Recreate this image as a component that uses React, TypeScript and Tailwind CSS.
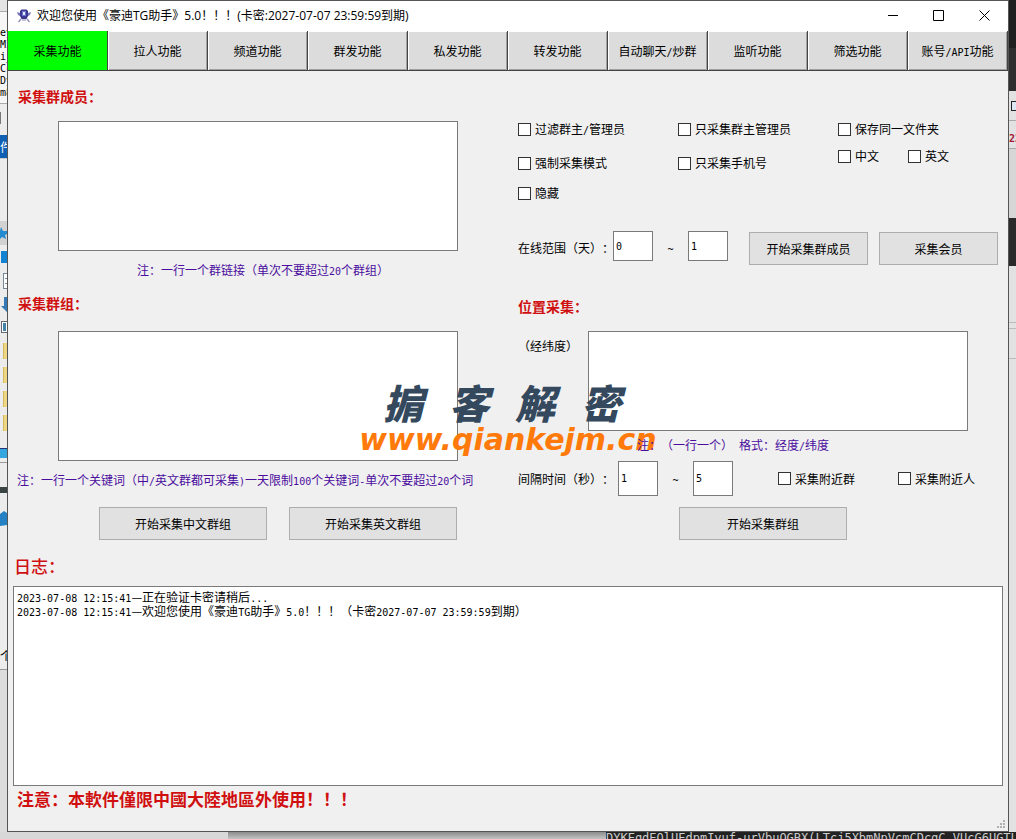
import { Fragment } from "react";

const tabs = [
  "采集功能",
  "拉人功能",
  "频道功能",
  "群发功能",
  "私发功能",
  "转发功能",
  "自动聊天/炒群",
  "监听功能",
  "筛选功能",
  "账号/API功能",
];

const logs = [
  "2023-07-08 12:15:41—正在验证卡密请稍后...",
  "2023-07-08 12:15:41—欢迎您使用《豪迪TG助手》5.0！！！（卡密2027-07-07 23:59:59到期）",
];

// Latin runs sit in a half-width face so they line up with the full-width characters
function T({ s }: { s: string }) {
  return (
    <>
      {s.split(/([\x20-\x7e]+)/).map((part, i) =>
        i % 2 ? (
          <span key={i} className="whitespace-pre font-['DejaVu_Sans_Mono',monospace] text-[10px] leading-none">{part}</span>
        ) : (
          <Fragment key={i}>{part}</Fragment>
        )
      )}
    </>
  );
}

function Check({ label }: { label: string }) {
  return (
    <label className="flex h-5 items-center gap-1 whitespace-nowrap">
      <input type="checkbox" className="size-[13px] shrink-0 appearance-none border border-[#333] bg-white checked:bg-[#333]" />
      <span><T s={label} /></span>
    </label>
  );
}

function Btn({ children, className }: { children: string; className: string }) {
  return (
    <button type="button" className={`h-[33px] border border-[#adadad] bg-[#e1e1e1] ${className}`}>
      <T s={children} />
    </button>
  );
}

function Num({ value, label, className }: { value: string; label: string; className: string }) {
  return (
    <input
      aria-label={label}
      defaultValue={value}
      className={`w-10 border border-[#7a7a7a] bg-white pl-0.5 font-['DejaVu_Sans_Mono',monospace] text-[10px] outline-none ${className}`}
    />
  );
}

function Heading({ children }: { children: string }) {
  return <h2 className="h-5 text-sm leading-[18px] font-bold text-[#d01010]">{children}</h2>;
}

function TitleBar() {
  return (
    <header className="flex h-[30px] items-center bg-white pr-[17px] pl-[9px]">
      <svg width="14" height="14" viewBox="0 0 14 14" aria-hidden="true">
        <path d="M3 2 4.500 .5h5L11 2v5L9.500 10h-5L3 7Z" fill="#3b368f" />
        <path d="M0 3l3 1v3L1 6ZM14 3l-3 1v3l2-1Z" fill="#7774bd" />
        <path d="M5 2h4v5H5Z" fill="#6f78c8" />
        <path d="M6 3h2v3H6Z" fill="#e4e7ff" />
        <path d="M4 10 1.500 13M10 10l2.500 3M5 11h4" stroke="#8a86b0" strokeWidth="1.200" />
      </svg>
      <h1 className="ml-[6px] flex-1 font-['Open_Sans','Noto_Sans_CJK_SC',sans-serif] text-xs whitespace-nowrap">欢迎您使用《豪迪TG助手》5.0！！！(卡密:2027-07-07 23:59:59到期)</h1>
      <div className="flex gap-[34px]">
        <button type="button" aria-label="最小化">
          <svg width="12" height="12" viewBox="0 0 12 12" stroke="#000" fill="none"><path d="M1 5.500h10" /></svg>
        </button>
        <button type="button" aria-label="最大化">
          <svg width="12" height="12" viewBox="0 0 12 12" stroke="#000" fill="none"><path d="M.5 .5h10v10h-10Z" /></svg>
        </button>
        <button type="button" aria-label="关闭">
          <svg width="12" height="12" viewBox="0 0 12 12" stroke="#000" fill="none"><path d="M.5 .5l10 10M10.500 .5l-10 10" /></svg>
        </button>
      </div>
    </header>
  );
}

function LeftColumn() {
  return (
    <section className="flex flex-col pt-4">
      <div className="pl-[10px]"><Heading>采集群成员：</Heading></div>
      <textarea aria-label="采集群成员" className="mx-[50px] mt-3.5 h-[130px] resize-none border border-[#7a7a7a] bg-white outline-none" />
      <p className="mt-[9px] h-5 pl-[129px] leading-5 whitespace-nowrap text-[#4b0d9e]"><T s="注：一行一个群链接（单次不要超过20个群组）" /></p>
      <div className="mt-3.5 pl-[10px]"><Heading>采集群组：</Heading></div>
      <textarea aria-label="采集群组" className="mx-[50px] mt-[17px] h-[130px] resize-none border border-[#7a7a7a] bg-white outline-none" />
      <p className="mt-[9px] h-5 pl-[9px] leading-5 whitespace-nowrap text-[#4b0d9e]">
        <T s="注：一行一个关键词（中/英文群都可采集)一天限制100个关键词-单次不要超过20个词" />
      </p>
      <div className="mt-[17px] flex gap-[22px] pl-[91px]">
        <Btn className="w-[168px]">开始采集中文群组</Btn>
        <Btn className="w-[168px]">开始采集英文群组</Btn>
      </div>
    </section>
  );
}

function RightColumn() {
  return (
    <section className="flex flex-col pt-12 pl-[10px]">
      <div className="flex">
        <div className="w-40">
          <Check label="过滤群主/管理员" />
          <div className="mt-3.5"><Check label="强制采集模式" /></div>
          <div className="mt-[10px]"><Check label="隐藏" /></div>
        </div>
        <div className="w-40">
          <Check label="只采集群主管理员" />
          <div className="mt-3.5"><Check label="只采集手机号" /></div>
        </div>
        <div>
          <Check label="保存同一文件夹" />
          <div className="mt-[7px] flex gap-[29px]">
            <Check label="中文" />
            <Check label="英文" />
          </div>
        </div>
      </div>

      <div className="mt-7 flex h-[34px] items-center">
        <span className="w-[95px] whitespace-nowrap">在线范围（天）：</span>
        <Num value="0" label="在线范围起" className="h-[30px] self-start" />
        <span className="w-[35px] text-center"><T s="~" /></span>
        <Num value="1" label="在线范围止" className="h-[30px] self-start" />
        <Btn className="ml-[21px] w-[119px] self-end">开始采集群成员</Btn>
        <Btn className="ml-[11px] w-[119px] self-end">采集会员</Btn>
      </div>

      <div className="mt-8"><Heading>位置采集：</Heading></div>
      <div className="mt-3.5 flex pr-[40px]">
        <label htmlFor="coords" className="mt-[5px] h-5 w-[70px] leading-5">（经纬度）</label>
        <textarea id="coords" className="h-[100px] flex-1 resize-none border border-[#7a7a7a] bg-white outline-none" />
      </div>
      <p className="relative z-20 mt-1 h-5 pl-[119px] leading-5 text-[#4b0d9e]"><T s="注：（一行一个） 格式：经度/纬度" /></p>

      <div className="mt-[6px] flex h-[35px] items-center">
        <span className="w-[100px] whitespace-nowrap">间隔时间（秒）：</span>
        <Num value="1" label="间隔时间起" className="h-[35px]" />
        <span className="w-[35px] text-center"><T s="~" /></span>
        <Num value="5" label="间隔时间止" className="h-[35px]" />
        <div className="ml-[45px] flex w-[120px]"><Check label="采集附近群" /></div>
        <Check label="采集附近人" />
      </div>
      <div className="mt-[11px] pl-[161px]">
        <Btn className="w-[168px]">开始采集群组</Btn>
      </div>
    </section>
  );
}

// Slivers of the other windows that show past the edges of this one
function LeftEdge() {
  return (
    <aside aria-hidden="true" className="flex w-[7px] shrink-0 flex-col overflow-hidden bg-[#ececec] leading-3">
      <div className="h-3 border-b border-[#aaa] bg-[#e4e4e4]" />
      <div className="h-[92px] border-b border-[#aaa] bg-[#f6f6f6] pt-[15px] font-['DejaVu_Sans_Mono',monospace] text-[10px]">
        {["ey", "MI", "i_", "Cc", "Dy", "m8"].map(t => <div key={t} className="h-3 w-3">{t}</div>)}
      </div>
      <div className="h-[31px] pt-2"><div className="h-3 w-px bg-[#777]" /></div>
      <div className="h-[23px] w-3 bg-[#0f5fb4] pt-1 text-xs leading-4 text-white">件</div>
      <div className="h-[63px] border-t border-[#ccc]" />
      <div className="h-6 bg-[#d2d2d2]">
        <svg width="7" height="24"><path d="M1 6l2 4h4v3l-2 1 1 4-4-2-2 2v-6l-1-2h1Z" fill="#248bd0" /></svg>
      </div>
      <div className="ml-px mt-1.5 h-3 bg-[#1283d2]" />
      <div className="mt-[10px] ml-[3px] h-4 border border-r-0 border-[#789] bg-white">
        <div className="mt-1 ml-px h-px bg-[#789]" />
        <div className="mt-1 ml-px h-px bg-[#789]" />
      </div>
      <svg className="mt-2 shrink-0" width="7" height="16"><path d="M4 0h3v15L1 9h3Z" fill="#3579b7" /></svg>
      <div className="mt-2 ml-px h-3 border border-r-0 border-[#667] bg-white p-px"><div className="h-2 bg-[#4382a8]" /></div>
      <div className="mt-[10px] ml-[3px] flex flex-col gap-2">
        {[0, 1, 2, 3].map(i => <div key={i} className="h-4 border-l border-[#d3b95e] bg-[#efd684]" />)}
      </div>
      <div className="mt-[17px] h-[10px] border-t border-[#237] bg-[#35a5df]" />
      <div className="mt-1 h-px shrink-0 bg-[#999]" />
      <div className="mt-6 h-[6px] bg-[#3a4543]" />
      <svg className="mt-[17px] shrink-0" width="7" height="18"><path d="M0 4l4-3 3 2v12l-7 1Z" fill="#2482c4" /></svg>
      <div className="mt-[120px] h-[22px] border-b border-[#999] text-xs"><span className="block w-3">个</span></div>
      <div className="flex-1 bg-[#dcdcdc]" />
    </aside>
  );
}

function RightEdge() {
  return (
    <aside aria-hidden="true" className="flex w-[7px] shrink-0 flex-col overflow-hidden bg-[#e2e2e2]">
      <div className="h-12 bg-[#1f1f1f]" />
      <div className="h-[43px] bg-[#2e2e2e]" />
      <div className="h-[30px] border-b border-[#aaa] pt-2.5 pl-0.5"><div className="h-2.5 w-3 border border-[#222] bg-[#dde6f3]" /></div>
      <div className="h-7 border-b border-[#aaa] pt-2 leading-4 font-bold text-[#a51835]"><T s="22" /></div>
      <div className="h-[69px] bg-[#d6d6d6]" />
      <div className="h-12 bg-[#2a2a2a]" />
      <div className="h-[57px] border-b border-[#bbb]" />
      <div className="h-[6px] border-b border-[#bbb]" />
      <div className="h-[30px] border-b border-[#bbb]" />
    </aside>
  );
}

export default function App() {
  return (
    <div className="flex min-h-screen flex-col bg-[#d4d4d4] font-['Noto_Sans_CJK_SC',sans-serif] text-xs text-black [text-spacing-trim:space-all]">
      <div className="flex flex-1">
        <LeftEdge />
        <main className="flex min-w-0 flex-1 flex-col border border-[#555] bg-[#f0f0f0]">
          <TitleBar />
          <nav className="grid grid-cols-10">
            {tabs.map((tab, i) => (
              <button
                key={tab}
                type="button"
                className={`h-10 border-r border-b border-[#444] whitespace-nowrap ${i === 0 ? "bg-[#00ff00]" : "bg-[#dcdcdc] shadow-[inset_1px_1px_0_#fff,inset_-1px_-1px_0_#a0a0a0]"}`}
              >
                <T s={tab} />
              </button>
            ))}
          </nav>

          <div className="relative grid grid-cols-2">
            <LeftColumn />
            <RightColumn />
            <div className="pointer-events-none absolute top-[305px] left-1/2 z-10 -translate-x-1/2 italic">
              <div className="flex h-[52px] items-center justify-center gap-[26px] pr-3 text-[40px] leading-[52px] font-black text-[#34495e]">
                <span>掮</span>
                <span>客</span>
                <span>解</span>
                <span>密</span>
              </div>
              <div className="h-6 font-['DejaVu_Sans',sans-serif] text-[30px] leading-6 font-bold text-[#ff7a0a]">www.qiankejm.cn</div>
            </div>
          </div>

          <h2 className="mt-[15px] h-6 pl-[6px] text-[17px] leading-[22px] font-medium text-[#d01010]">日志：</h2>
          <div role="log" className="mx-[5px] mt-[7px] h-[200px] border border-[#7a7a7a] bg-white px-[3px] pt-[3px]">
            {logs.map(line => <div key={line} className="h-3.5 leading-3.5"><T s={line} /></div>)}
          </div>
          <footer className="mt-0.5 flex flex-1 items-start justify-between pl-[9px]">
            <p className="h-6 text-[17px] leading-[22px] font-bold text-[#d01010]">注意：本軟件僅限中國大陸地區外使用！！！</p>
            <svg className="mr-[2px] mb-[2px] self-end" width="9" height="9" fill="#b0b0b0" aria-hidden="true">
              <path d="M6 0h2v2H6ZM6 3h2v2H6ZM6 6h2v2H6ZM3 3h2v2H3ZM3 6h2v2H3ZM0 6h2v2H0Z" />
            </svg>
          </footer>
        </main>
        <RightEdge />
      </div>
      <div aria-hidden="true" className="flex h-[7px] overflow-hidden">
        <div className="w-[228px] bg-[#d8d8d8]" />
        <div className="flex-1 bg-linear-to-b from-[#8c8c8c] to-[#c4c4c4]" />
        <div className="w-[410px] overflow-hidden bg-[#222] font-['DejaVu_Sans_Mono',monospace] text-xs leading-3 whitespace-nowrap text-[#ccc]">
          DYKEqdEQlUEdpmIyuf-urVbuQGBX(LTcj5XbmNpVcmCDcqC_VUcG6UGTLDEd
        </div>
      </div>
    </div>
  );
}
